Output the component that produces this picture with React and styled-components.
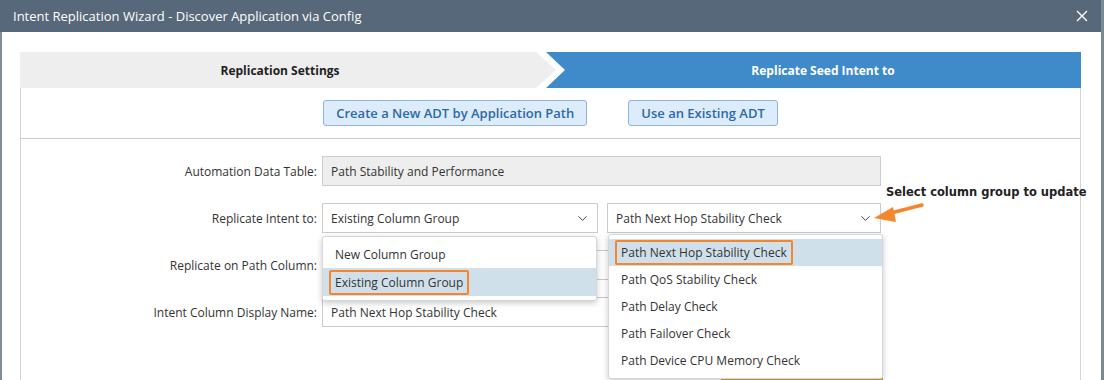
import React from "react";
import styled, { createGlobalStyle } from "styled-components";
import { ChevronDown } from "lucide-react";

const GlobalStyle = createGlobalStyle`
  html, body {
    margin: 0;
    padding: 0;
    background: #7b8993;
    font-family: "Open Sans", "Liberation Sans", sans-serif;
  }
`;

const Dialog = styled.div`
  width: 1101px;
  height: 380px;
  overflow: hidden;
  background: #ffffff;
  display: flex;
  flex-direction: column;
`;

const TitleBar = styled.div`
  height: 32px;
  flex: none;
  background: #566879;
  color: #ffffff;
  display: flex;
  align-items: center;
  justify-content: space-between;
  padding: 0 12px 0 13px;
  font-size: 13px;
`;

const CloseButton = styled.button`
  appearance: none;
  border: none;
  background: none;
  padding: 0;
  width: 14px;
  height: 14px;
  display: flex;
  align-items: center;
  justify-content: center;
  cursor: pointer;
`;

const Body = styled.div`
  flex: 1;
  border-left: 2px solid #7f8d97;
  padding: 20px 20px 0 18px;
  display: flex;
  flex-direction: column;
`;

const Steps = styled.div`
  display: flex;
  height: 36px;
  flex: none;
`;

const Step = styled.div`
  box-sizing: border-box;
  display: flex;
  align-items: center;
  justify-content: center;
  font-size: 12px;
  font-weight: 700;
  background: ${(p) => (p.$active ? "#3f8ac9" : "#eeeeee")};
  color: ${(p) => (p.$active ? "#ffffff" : "#222222")};
  clip-path: ${(p) =>
    p.$active
      ? "polygon(0 0, 100% 0, 100% 100%, 0 100%, 19px 50%)"
      : "polygon(0 0, calc(100% - 20px) 0, 100% 50%, calc(100% - 20px) 100%, 0 100%)"};
  ${(p) =>
    p.$active
      ? "flex: 1; margin-left: -10px; padding-left: 19px;"
      : "width: 536px; padding-right: 16px;"}
`;

const Panel = styled.div`
  flex: 1;
  border-left: 1px solid #d4d4d4;
  border-right: 1px solid #d4d4d4;
  display: flex;
  flex-direction: column;
`;

const ActionBar = styled.div`
  height: 50px;
  border-bottom: 1px solid #d0d0d0;
  display: flex;
  align-items: center;
  justify-content: center;
  gap: 41px;
`;

const ActionButton = styled.button`
  appearance: none;
  height: 26px;
  padding: 0 12px;
  border: 1px solid #8fb4da;
  border-radius: 3px;
  background: #dcecfb;
  color: #2d69a6;
  font-family: "Open Sans", "Liberation Sans", sans-serif;
  font-size: 13px;
  font-weight: 600;
  cursor: pointer;
`;

const Form = styled.div`
  display: grid;
  grid-template-columns: 296px 559px;
  grid-auto-rows: 30px;
  column-gap: 5px;
  row-gap: 17px;
  padding-top: 17px;
`;

const Label = styled.div`
  display: flex;
  align-items: center;
  justify-content: flex-end;
  font-size: 12px;
  color: #333333;
`;

const Field = styled.div`
  height: 30px;
  box-sizing: border-box;
  border: 1px solid ${(p) => (p.$readOnly ? "#cccccc" : "#cacaca")};
  background: ${(p) => (p.$readOnly ? "#eeeeee" : "#ffffff")};
  display: flex;
  align-items: center;
  padding: 0 8px;
  font-size: 12px;
  color: #333333;
`;

const SelectRow = styled.div`
  display: flex;
  gap: 9px;
`;

const SelectWrap = styled.div`
  position: relative;
  width: ${(p) => p.$width}px;
`;

const Select = styled(Field)`
  justify-content: space-between;
  padding: 0 7px 0 8px;
`;

const Menu = styled.div`
  position: absolute;
  z-index: 5;
  top: calc(100% + ${(p) => p.$offset}px);
  left: ${(p) => p.$shift}px;
  width: ${(p) => p.$width}px;
  box-sizing: border-box;
  background: #ffffff;
  border: 1px solid #d6d6d6;
  border-radius: 3px;
  box-shadow: 0 2px 6px rgba(0, 0, 0, 0.22);
  padding: ${(p) => p.$padTop}px 0 4px;
`;

const MenuItem = styled.div`
  height: ${(p) => p.$height}px;
  display: flex;
  align-items: center;
  padding-left: 12px;
  font-size: 12px;
  color: #333333;
  background: ${(p) => (p.$selected ? "#d0e0ea" : "transparent")};
`;

const Callout = styled.span`
  display: inline-flex;
  align-items: center;
  height: 21px;
  padding: 0 4px;
  margin-left: -6px;
  border: 2px solid #f6852b;
  border-radius: 2px;
`;

const Note = styled.div`
  position: absolute;
  left: 279px;
  top: -18px;
  white-space: nowrap;
  font-family: "DejaVu Sans", Verdana, sans-serif;
  font-size: 11.5px;
  font-weight: 700;
  color: #222222;
`;

const NoteArrow = styled.svg`
  position: absolute;
  left: 262px;
  top: -2px;
`;

const FooterEdge = styled.div`
  margin: 51px 0 0 700px;
  width: 160px;
  height: 20px;
  border-top: 2px solid #e2a13a;
  border-right: 2px solid #e2a13a;
`;

const leftOptions = ["New Column Group", "Existing Column Group"];
const rightOptions = [
  "Path Next Hop Stability Check",
  "Path QoS Stability Check",
  "Path Delay Check",
  "Path Failover Check",
  "Path Device CPU Memory Check",
];

export default function App() {
  return (
    <>
      <GlobalStyle />
      <Dialog>
        <TitleBar>
          <span>Intent Replication Wizard - Discover Application via Config</span>
          <CloseButton aria-label="Close">
            <svg width="12" height="12" viewBox="0 0 12 12">
              <path d="M1 1L11 11M11 1L1 11" stroke="#ffffff" strokeWidth="1.4" />
            </svg>
          </CloseButton>
        </TitleBar>
        <Body>
          <Steps>
            <Step>Replication Settings</Step>
            <Step $active>Replicate Seed Intent to</Step>
          </Steps>
          <Panel>
            <ActionBar>
              <ActionButton>Create a New ADT by Application Path</ActionButton>
              <ActionButton>Use an Existing ADT</ActionButton>
            </ActionBar>
            <Form>
              <Label>Automation Data Table:</Label>
              <Field $readOnly>Path Stability and Performance</Field>

              <Label>Replicate Intent to:</Label>
              <SelectRow>
                <SelectWrap $width={276}>
                  <Select>
                    Existing Column Group
                    <ChevronDown size={15} strokeWidth={1.6} color="#444" />
                  </Select>
                  <Menu $offset={3} $shift={0} $width={275} $padTop={3}>
                    {leftOptions.map((o, i) => (
                      <MenuItem key={o} $height={28} $selected={i === 1}>
                        {i === 1 ? <Callout>{o}</Callout> : o}
                      </MenuItem>
                    ))}
                  </Menu>
                </SelectWrap>
                <SelectWrap $width={274}>
                  <Select>
                    Path Next Hop Stability Check
                    <ChevronDown size={15} strokeWidth={1.6} color="#444" />
                  </Select>
                  <Note>Select column group to update</Note>
                  <NoteArrow width="58" height="26" viewBox="0 0 58 26">
                    <path d="M53 4L20 12.5" stroke="#f6852b" strokeWidth="3.5" strokeLinecap="round" />
                    <polygon points="5,17 24,6 27,21" fill="#f6852b" />
                  </NoteArrow>
                  <Menu $offset={1} $shift={1} $width={275} $padTop={4}>
                    {rightOptions.map((o, i) => (
                      <MenuItem key={o} $height={27} $selected={i === 0}>
                        {i === 0 ? <Callout>{o}</Callout> : o}
                      </MenuItem>
                    ))}
                  </Menu>
                </SelectWrap>
              </SelectRow>

              <Label>Replicate on Path Column:</Label>
              <Field />

              <Label>Intent Column Display Name:</Label>
              <Field>Path Next Hop Stability Check</Field>
            </Form>
            <FooterEdge />
          </Panel>
        </Body>
      </Dialog>
    </>
  );
}
